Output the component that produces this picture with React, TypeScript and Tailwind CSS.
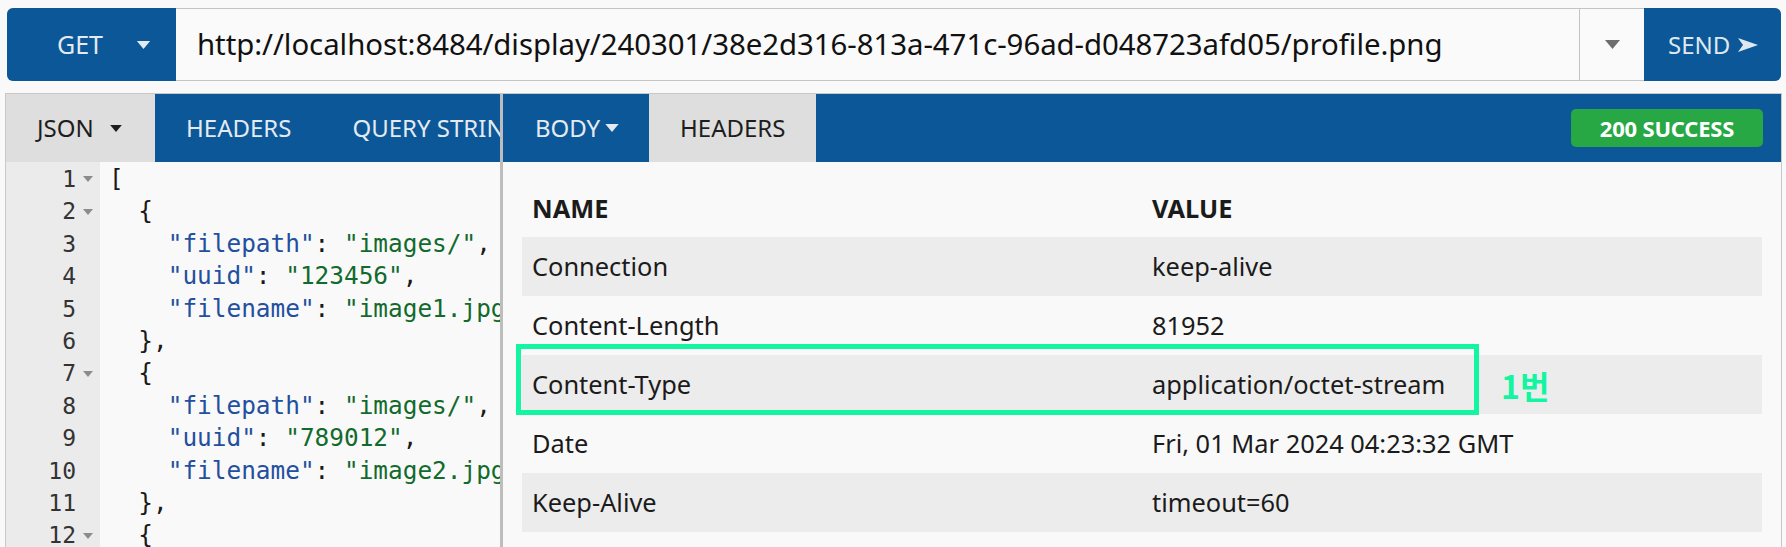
import React from "react";

const codeLines: React.ReactNode[] = [
  <>[</>,
  <>{"  {"}</>,
  <>
    {"    "}
    <span className="text-[#234f9e]">"filepath"</span>: <span className="text-[#126a2c]">"images/"</span>,
  </>,
  <>
    {"    "}
    <span className="text-[#234f9e]">"uuid"</span>: <span className="text-[#126a2c]">"123456"</span>,
  </>,
  <>
    {"    "}
    <span className="text-[#234f9e]">"filename"</span>: <span className="text-[#126a2c]">"image1.jpg"</span>
  </>,
  <>{"  },"}</>,
  <>{"  {"}</>,
  <>
    {"    "}
    <span className="text-[#234f9e]">"filepath"</span>: <span className="text-[#126a2c]">"images/"</span>,
  </>,
  <>
    {"    "}
    <span className="text-[#234f9e]">"uuid"</span>: <span className="text-[#126a2c]">"789012"</span>,
  </>,
  <>
    {"    "}
    <span className="text-[#234f9e]">"filename"</span>: <span className="text-[#126a2c]">"image2.jpg"</span>
  </>,
  <>{"  },"}</>,
  <>{"  {"}</>,
];

const foldable = [1, 2, 7, 12];

const headers = [
  ["Connection", "keep-alive"],
  ["Content-Length", "81952"],
  ["Content-Type", "application/octet-stream"],
  ["Date", "Fri, 01 Mar 2024 04:23:32 GMT"],
  ["Keep-Alive", "timeout=60"],
];

const Caret = ({ className, w = 15, h = 8 }: { className: string; w?: number; h?: number }) => (
  <svg width={w} height={h} viewBox="0 0 10 6" className={className}>
    <polygon points="0,0 10,0 5,6" fill="currentColor" />
  </svg>
);

const App: React.FC = () => {
  return (
    <div className="h-[547px] w-full overflow-hidden bg-[#f9f9f9] font-['Noto_Sans',sans-serif]">
      {/* request bar */}
      <div className="ml-[7px] mr-[5px] mt-[8px] flex h-[73px] rounded-[6px] border border-[#c4c4c4] bg-[#fafafa]">
        <div className="-my-px -ml-px flex w-[169px] items-center rounded-l-[6px] bg-[#0b5797] pl-[50px] text-[25px] text-[#e3eaf1]">
          <span>GET</span>
          <Caret className="ml-[33px] text-[#e3eaf1]" />
        </div>
        <div className="flex flex-1 items-center pl-[21px] text-[29.4px] tracking-[-0.05px] text-[#111]">
          http://localhost:8484/display/240301/38e2d316-813a-471c-96ad-d048723afd05/profile.png
        </div>
        <div className="flex w-[65px] items-center justify-center border-l border-[#c4c4c4]">
          <Caret className="text-[#6e6e6e]" w={17} h={9} />
        </div>
        <div className="-my-px -mr-px flex w-[137px] items-center rounded-r-[6px] bg-[#0b5797] pl-[24px] text-[24px] text-[#dfe8f0]">
          <span>SEND</span>
          <svg width="20" height="14" viewBox="0 0 20 14" className="ml-[8px]">
            <polygon points="0,0 20,7 0,14 5,7" fill="#dfe8f0" />
          </svg>
        </div>
      </div>

      {/* panels */}
      <div className="ml-[5px] mr-[4px] mt-[12px] flex h-[454px] border-t border-[#c8c8c8]">
        {/* request side */}
        <div className="flex w-[495px] flex-col border-l border-[#c8c8c8]">
          <div className="flex h-[68px] shrink-0 items-stretch overflow-hidden whitespace-nowrap bg-[#0b5797] text-[24px]">
            <div className="flex w-[149px] shrink-0 items-center bg-[#dedede] pl-[31px] text-[#1d1d1d]">
              <span>JSON</span>
              <Caret className="ml-[16px] text-[#1d1d1d]" w={12} h={7} />
            </div>
            <div className="flex shrink-0 items-center pl-[31px] pr-[31px] text-[#e3eaf1]">HEADERS</div>
            <div className="flex shrink-0 items-center pl-[30px] text-[#e3eaf1]">QUERY STRING</div>
          </div>
          <div className="flex flex-1 overflow-hidden">
            <div className="w-[94px] shrink-0 bg-[#ebebeb] pt-px font-['DejaVu_Sans_Mono',monospace] text-[23px] leading-[32.4px] text-[#333]">
              {codeLines.map((_, i) => (
                <div key={i} className="flex items-center">
                  <span className="w-[70px] text-right">{i + 1}</span>
                  {foldable.includes(i + 1) && <Caret className="ml-[7px] text-[#8c8c8c]" w={10} h={6} />}
                </div>
              ))}
            </div>
            <div className="flex-1 overflow-hidden whitespace-pre pl-[9px] pt-px font-['DejaVu_Sans_Mono',monospace] text-[24.4px] leading-[32.4px] text-[#1a1a1a]">
              {codeLines.map((l, i) => (
                <div key={i}>{l}</div>
              ))}
            </div>
          </div>
        </div>

        <div className="w-[3px] shrink-0 bg-[#bdbdbd]" />

        {/* response side */}
        <div className="relative flex flex-1 flex-col border-r border-[#c8c8c8]">
          <div className="flex h-[68px] shrink-0 items-stretch bg-[#0b5797] text-[24px]">
            <div className="flex w-[146px] items-center pl-[32px] text-[#e3eaf1]">
              <span>BODY</span>
              <Caret className="ml-[4px] text-[#e3eaf1]" w={16} h={8} />
            </div>
            <div className="flex w-[167px] items-center pl-[31px] bg-[#dedede] text-[#1d1d1d]">HEADERS</div>
            <div className="ml-auto mr-[18px] flex items-center">
              <div className="flex h-[38px] w-[192px] items-center justify-center rounded-[5px] bg-[#28a745] text-[22px] font-bold tracking-[-0.2px] text-white">
                200 SUCCESS
              </div>
            </div>
          </div>

          <div className="flex-1 px-[19px] pt-[18px] text-[25.4px] text-[#1b1b1b]">
            <div className="flex h-[57px] items-center font-bold">
              <div className="w-[620px] pl-[10px]">NAME</div>
              <div className="pl-[10px]">VALUE</div>
            </div>
            {headers.map(([k, v], i) => (
              <div key={k} className={`flex h-[59px] items-center ${i % 2 === 0 ? "bg-[#ececec]" : ""}`}>
                <div className="w-[620px] pl-[10px]">{k}</div>
                <div className="pl-[10px]">{v}</div>
              </div>
            ))}
          </div>

          {/* annotation */}
          <div className="absolute left-[13px] top-[250px] h-[71px] w-[963px] border-[5px] border-[#14f5a2]" />
          <div className="absolute left-[998px] top-[275px] font-['Noto_Sans_CJK_KR',sans-serif] text-[32px] font-bold leading-none text-[#14f5a2]">
            1번
          </div>
        </div>
      </div>
    </div>
  );
};

export default App;
